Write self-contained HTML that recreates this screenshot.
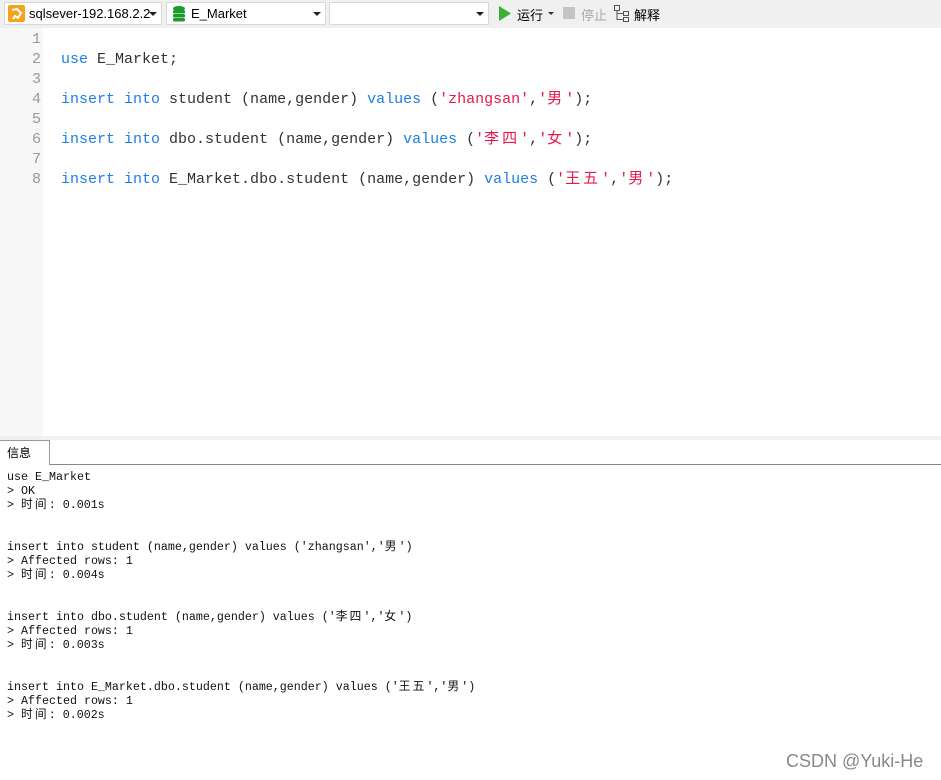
<!DOCTYPE html>
<html><head><meta charset="utf-8"><style>
*{margin:0;padding:0;box-sizing:border-box}
body{width:941px;height:780px;overflow:hidden;background:#fff;font-family:"Liberation Sans","Noto Sans CJK SC",sans-serif;position:relative}
.tb{position:absolute;left:0;top:0;width:941px;height:28px;background:#f0f0f0}
.sel{position:absolute;top:2px;height:23px;background:#fff;border:1px solid #d9d9d9;font-size:13px;line-height:21px}
.arr{position:absolute;right:4px;top:9px;width:0;height:0;border-left:4px solid transparent;border-right:4px solid transparent;border-top:4px solid #222}
.gut{position:absolute;left:0;top:28px;width:43px;height:408px;background:#f7f7f7}
.code{position:absolute;top:30px;font-family:"Liberation Mono","Noto Sans CJK SC",monospace;font-size:15px;line-height:20px;white-space:pre}
.ln{left:0;width:41px;text-align:right;color:#999}
.src{left:61px;color:#333}
.k{color:#1a7fe6}.s{color:#e8184b}
.c{font-family:"Noto Sans CJK SC",sans-serif;line-height:0;letter-spacing:3px}
.strip{position:absolute;left:0;top:436px;width:941px;height:4px;background:#f0f0f0}
.tab{position:absolute;left:0;top:440px;width:50px;height:25px;border:1px solid #999;border-bottom:none;border-left:none;font-size:12px;padding:3px 0 0 7px;background:#fff}
.tl{position:absolute;left:50px;top:464px;width:891px;height:1px;background:#888}
.out{position:absolute;left:7px;top:470px;font-family:"Liberation Mono","Noto Sans CJK SC",monospace;font-size:11.67px;line-height:14px;white-space:pre;color:#111}
.out .c{letter-spacing:2.2px}
.wm{position:absolute;left:786px;top:751px;font-size:18px;color:#888}
</style></head><body>
<div class="tb">
 <div class="sel" style="left:4px;width:158px">
  <svg style="position:absolute;left:3px;top:2px" width="17" height="17"><rect width="17" height="17" rx="2" fill="#f5a31a"/><path d="M4 5 L9 4 L13 8 L10 13 L7 11 L5 14" stroke="#fff" stroke-width="2" fill="none"/></svg>
  <span style="position:absolute;left:24px">sqlsever-192.168.2.2</span><div class="arr"></div></div>
 <div class="sel" style="left:166px;width:160px">
  <svg style="position:absolute;left:5px;top:2px" width="14" height="17"><ellipse cx="7" cy="3.5" rx="6" ry="2.5" fill="#1a9c2a"/><rect x="1" y="5" width="12" height="3.5" rx="1.5" fill="#1a9c2a"/><rect x="1" y="9" width="12" height="3.5" rx="1.5" fill="#1a9c2a"/><rect x="1" y="13" width="12" height="3.5" rx="1.5" fill="#1a9c2a"/></svg>
  <span style="position:absolute;left:24px">E_Market</span><div class="arr"></div></div>
 <div class="sel" style="left:329px;width:160px"><div class="arr"></div></div>
 <svg style="position:absolute;left:498px;top:6px" width="14" height="15"><path d="M1 0 L13 7.5 L1 15Z" fill="#3cb034"/></svg>
 <span style="position:absolute;left:517px;top:5px;font-size:13px">运行</span>
 <div style="position:absolute;left:548px;top:12px;border-left:3px solid transparent;border-right:3px solid transparent;border-top:3px solid #333"></div>
 <div style="position:absolute;left:563px;top:7px;width:12px;height:12px;background:#c4c4c4"></div>
 <span style="position:absolute;left:581px;top:5px;font-size:13px;color:#aaa">停止</span>
 <svg style="position:absolute;left:614px;top:5px" width="16" height="17" fill="none" stroke="#555"><rect x="0.5" y="0.5" width="5" height="5"/><rect x="9.5" y="6.5" width="5" height="4"/><rect x="9.5" y="12.5" width="5" height="4"/><path d="M3 6 V14.5 H9.5 M3 8.5 H9.5"/></svg>
 <span style="position:absolute;left:634px;top:5px;font-size:13px">解释</span>
</div>
<div class="gut"></div>
<div class="code ln">1
2
3
4
5
6
7
8</div>
<div class="code src">
<span class="k">use</span> E_Market;

<span class="k">insert</span> <span class="k">into</span> student (name,gender) <span class="k">values</span> (<span class="s">'zhangsan'</span>,<span class="s">'<span class="c">男</span>'</span>);

<span class="k">insert</span> <span class="k">into</span> dbo.student (name,gender) <span class="k">values</span> (<span class="s">'<span class="c">李四</span>'</span>,<span class="s">'<span class="c">女</span>'</span>);

<span class="k">insert</span> <span class="k">into</span> E_Market.dbo.student (name,gender) <span class="k">values</span> (<span class="s">'<span class="c">王五</span>'</span>,<span class="s">'<span class="c">男</span>'</span>);</div>
<div class="strip"></div>
<div class="tab">信息</div>
<div class="tl"></div>
<div class="out">use E_Market
&gt; OK
&gt; <span class="c">时间</span>: 0.001s


insert into student (name,gender) values ('zhangsan','<span class="c">男</span>')
&gt; Affected rows: 1
&gt; <span class="c">时间</span>: 0.004s


insert into dbo.student (name,gender) values ('<span class="c">李四</span>','<span class="c">女</span>')
&gt; Affected rows: 1
&gt; <span class="c">时间</span>: 0.003s


insert into E_Market.dbo.student (name,gender) values ('<span class="c">王五</span>','<span class="c">男</span>')
&gt; Affected rows: 1
&gt; <span class="c">时间</span>: 0.002s</div>
<div class="wm">CSDN @Yuki-He</div>
</body></html>
